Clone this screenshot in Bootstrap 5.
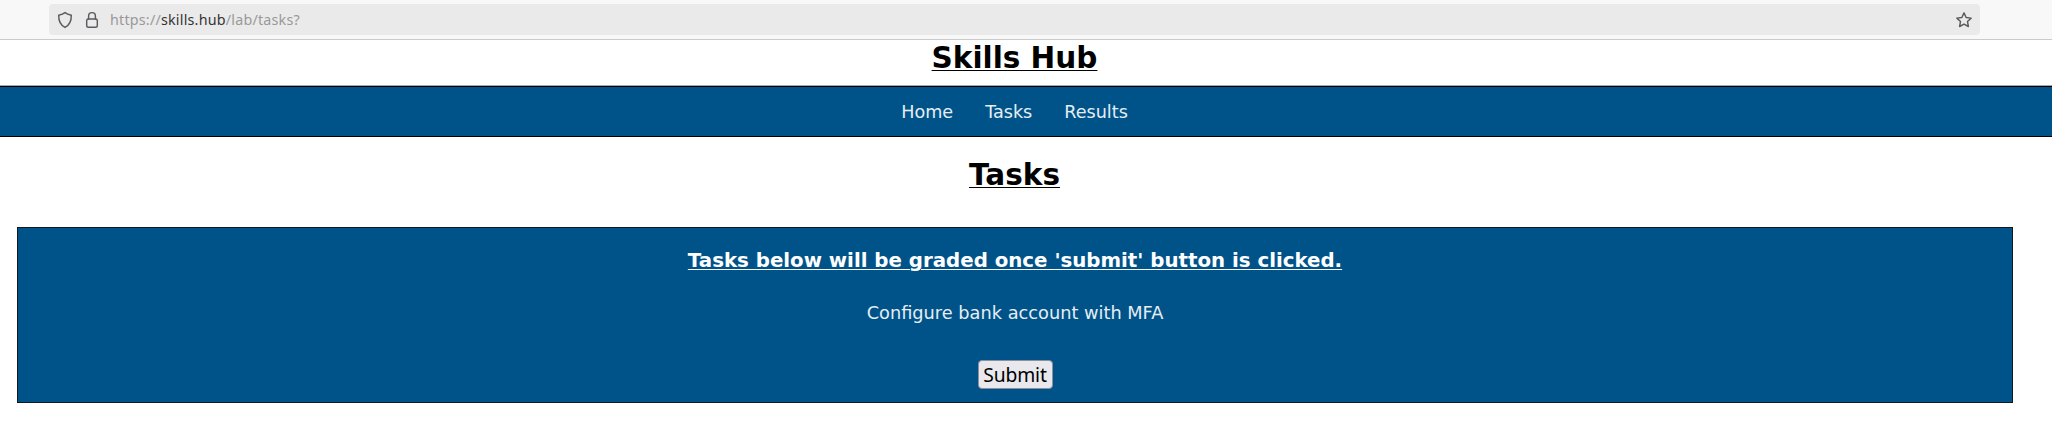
<!DOCTYPE html>
<html lang="en">
<head>
<meta charset="utf-8">
<meta name="viewport" content="width=device-width, initial-scale=1">
<title>Skills Hub</title>
<link href="https://cdn.jsdelivr.net/npm/bootstrap@5.3.0/dist/css/bootstrap.min.css" rel="stylesheet">
<style>
body{background:#fff;color:#000;font:17.6px/22px "DejaVu Sans",sans-serif;overflow:hidden}
.toolbar{height:40px;padding:4px 72px 0 49px;background:#f8f8f8;border-bottom:1px solid #cbcbcd}
.address{height:31px;background:#eaeaea;border-radius:4px;padding:0 7px 0 8px;color:#5b5b5f}
.address svg{display:block;fill:none;stroke:currentColor;stroke-width:1.45;stroke-linejoin:round;stroke-linecap:round}
.lock{margin-left:12px}
.url{font:14.3px/20px "Noto Sans",sans-serif;letter-spacing:.21px;color:#999;margin:1px 0 0 11px}
.url b{font-weight:400;color:#333}
.page-col{width:2029px}
.title{font-size:29.5px;line-height:34px;font-weight:700;text-decoration:underline;text-decoration-thickness:1px;text-underline-offset:2px;margin:0}
.site-head{height:46px}
.site-head .title{padding-top:1px}
.menu{height:51px;background:#005389;border-top:1px solid #000;border-bottom:1px solid #000;box-shadow:0 -1px #a8a8a8}
.menu .page-col{gap:32px}
.menu a,.panel p{color:#e6eef4}
.page-head{height:90px;padding-top:21px}
.panel{height:176px;margin:0 16px 0 17px;background:#005389;border:1px solid #101820;color:#fff}
.lead-text{font-size:19.8px;line-height:24px;font-weight:700;text-decoration:underline;text-decoration-thickness:1px;text-underline-offset:2px;margin:21px 0 0}
.panel p{font-size:17.75px;margin:29px 0 0}
.send{width:75px;height:29px;margin-top:36px;padding:0;background:#e9e9ed;border:1px solid #8f8f9d;border-radius:4px;font:19.3px/27px "Noto Sans",sans-serif;letter-spacing:-.15px;color:#000}
</style>
<script src="https://cdn.jsdelivr.net/npm/bootstrap@5.3.0/dist/js/bootstrap.bundle.min.js"></script>
</head>
<body>
<div class="toolbar">
  <div class="address d-flex align-items-center">
    <svg width="16" height="18" viewBox="0 0 16 18"><path d="M8 1.6C6.2 3 4 3.7 1.7 4.2c-.1 5.6 1.5 9.8 6.3 12.2 4.8-2.4 6.4-6.6 6.3-12.2C12 3.700 9.800 3 8 1.600z"/></svg>
    <svg class="lock" width="14" height="18" viewBox="0 0 14 18"><rect x="1.700" y="8" width="10.600" height="8.200" rx="1.500"/><path d="M3.600 8V5a3.400 3.400 0 0 1 6.800 0v3"/></svg>
    <div class="url text-nowrap">https://<b>skills.hub</b>/lab/tasks?</div>
    <svg class="ms-auto" width="18" height="18" viewBox="0 0 18 18"><path d="M9 1.900l2.150 4.550 5 .65-3.650 3.450.9 4.950L9 13.100l-4.400 2.400.9-4.950L1.850 7.100l5-.65z"/></svg>
  </div>
</div>
<header class="site-head"><div class="page-col text-center"><h1 class="title">Skills Hub</h1></div></header>
<nav class="menu">
  <div class="page-col h-100 d-flex justify-content-center align-items-center">
    <a class="text-decoration-none" href="#">Home</a>
    <a class="text-decoration-none" href="#">Tasks</a>
    <a class="text-decoration-none" href="#">Results</a>
  </div>
</nav>
<main class="page-col">
  <div class="page-head text-center"><h2 class="title">Tasks</h2></div>
  <section class="panel d-flex flex-column align-items-center">
    <h3 class="lead-text text-nowrap">Tasks below will be graded once 'submit' button is clicked.</h3>
    <p>Configure bank account with MFA</p>
    <button class="send" type="button">Submit</button>
  </section>
</main>
</body>
</html>
